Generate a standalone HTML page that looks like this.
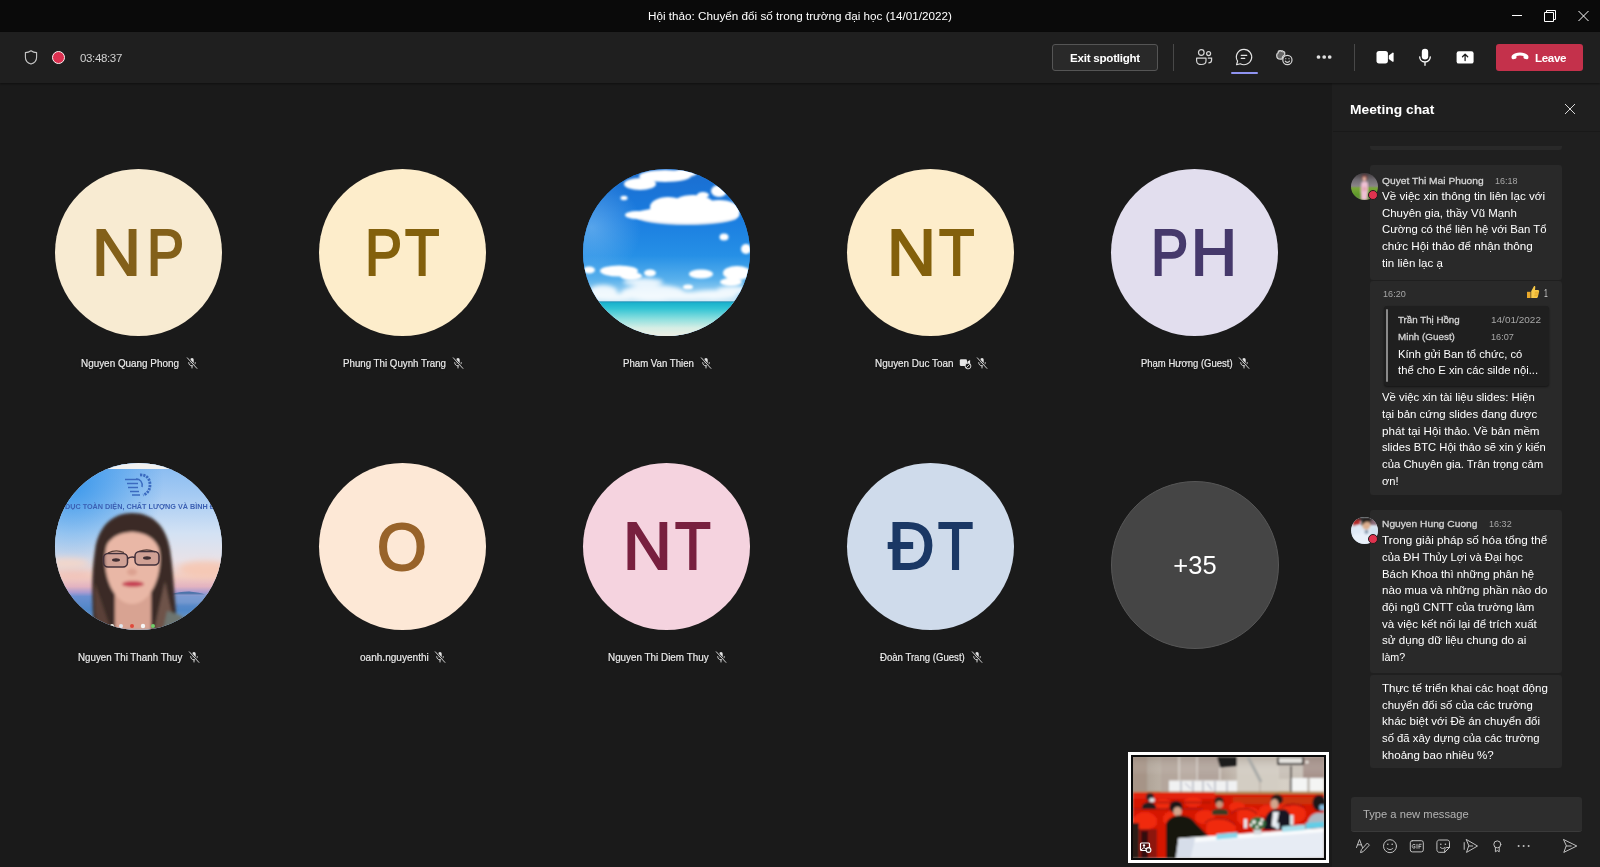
<!DOCTYPE html>
<html>
<head>
<meta charset="utf-8">
<title>Meeting</title>
<style>
*{box-sizing:border-box;margin:0;padding:0}
html,body{width:1600px;height:867px;overflow:hidden;background:#1f1f1f;font-family:"Liberation Sans",sans-serif;color:#fff}
.abs{position:absolute}
#titlebar{will-change:transform;position:absolute;left:0;top:0;width:1600px;height:32px;background:#0a0a0a}
#title{position:absolute;left:0;width:1600px;top:9px;text-align:center;font-size:11.7px;line-height:14px;color:#fff;letter-spacing:0}
#toolbar{will-change:transform;position:absolute;left:0;top:32px;width:1600px;height:51px;background:#1f1f1f;box-shadow:0 1px 2px rgba(0,0,0,.45);z-index:3}
#stage{will-change:transform;position:absolute;left:0;top:83px;width:1332px;height:784px;background:#1a1a1a}
#chat{will-change:transform;position:absolute;left:1333px;top:83px;width:267px;height:784px;background:#1f1f1f}
.av{position:absolute;width:167px;height:167px;border-radius:50%;overflow:hidden;text-align:center}
.av span{display:block}
.L{position:absolute;font-weight:normal;font-size:64px;line-height:64px;-webkit-text-stroke:2.0px currentColor;transform-origin:0 0}
.nm{position:absolute;transform-origin:0 0;-webkit-text-stroke:0.2px #ececec;font-size:11px;line-height:14px;color:#ececec;white-space:nowrap;text-shadow:0 0 2px rgba(0,0,0,.6)}
.mic{position:absolute;width:12px;height:12px}
.bubl{position:absolute;left:37px;width:192px;background:#292929;border-radius:3px}
.ln{position:absolute;white-space:nowrap;line-height:16px;transform-origin:0 0}
.ct{position:absolute;left:1383px;font-size:11.4px;line-height:16.7px;color:#fff;white-space:nowrap}
.cn{position:absolute;font-size:9.8px;line-height:12px;color:#d6d6d6;white-space:nowrap;font-weight:bold}
.tm{position:absolute;font-size:9.8px;line-height:12px;color:#adadad;white-space:nowrap}
</style>
</head>
<body>
<div id="titlebar">
  <div id="title">Hội thảo: Chuyển đổi số trong trường đại học (14/01/2022)</div>
  <svg class="abs" style="left:1506px;top:4px" width="90" height="24" viewBox="0 0 90 24" fill="none" stroke="#fff" stroke-width="1">
    <path d="M6 11.5h10"/>
    <path d="M38.5 8.5h9v9h-9z"/><path d="M40.5 8.5v-2h9v9h-2"/>
    <path d="M72.5 7l10 10M82.500 7l-10 10"/>
  </svg>
</div>

<div id="toolbar">
  <!-- shield -->
  <svg class="abs" style="left:23px;top:17px" width="16" height="17" viewBox="0 0 16 17" fill="none" stroke="#c8c8c8" stroke-width="1.1" stroke-linejoin="round">
    <path d="M8 1.7c1.7 1.2 3.6 1.8 5.6 1.9v4.6c0 3.300-2.100 5.700-5.600 6.900c-3.500-1.200-5.600-3.600-5.600-6.900v-4.600c2-0.100 3.900-0.700 5.600-1.900z"/>
  </svg>
  <!-- record -->
  <div class="abs" style="left:51.500px;top:19px;width:13px;height:13px;border-radius:50%;border:1.700px solid #fbf3f4;background:#dc3050"></div>
  <div class="abs" style="left:80px;top:19px;font-size:11.5px;line-height:14px;color:#d0d0d0;letter-spacing:-0.35px">03:48:37</div>

  <!-- exit spotlight -->
  <div class="abs" style="left:1052px;top:12px;width:106px;height:27px;border:1px solid #555;border-radius:3px;background:#292929;text-align:center;font-size:11.6px;line-height:25px;font-weight:bold;color:#fff;letter-spacing:-0.25px">Exit spotlight</div>
  <div class="abs" style="left:1173px;top:12px;width:1px;height:27px;background:#484848"></div>

  <!-- people -->
  <svg class="abs" style="left:1194px;top:15px" width="20" height="20" viewBox="0 0 20 20" fill="none" stroke="#d6d6d6" stroke-width="1.2">
    <circle cx="7.300" cy="5.500" r="2.800"/>
    <circle cx="14.600" cy="6.600" r="2"/>
    <path d="M2.600 11.200h9.400v2.500c0 2.200-1.900 3.800-4.700 3.800s-4.700-1.600-4.700-3.800z" stroke-linejoin="round"/>
    <path d="M13.800 11.200h3.800v1.800c0 1.700-1.300 2.900-3.200 2.900"/>
  </svg>
  <!-- chat -->
  <svg class="abs" style="left:1234px;top:15px" width="20" height="20" viewBox="0 0 20 20" fill="none" stroke="#e4e4e4" stroke-width="1.2" stroke-linecap="round" stroke-linejoin="round">
    <path d="M10 2.300a7.700 7.700 0 1 1-3.700 14.450l-3.700 1 1-3.600a7.700 7.700 0 0 1 6.400-11.850z"/>
    <path d="M7.200 8.300h5.600M7.200 11.300h3.600"/>
  </svg>
  <div class="abs" style="left:1231px;top:40px;width:27px;height:2px;border-radius:1px;background:#8f93f0"></div>
  <!-- reactions -->
  <svg class="abs" style="left:1274px;top:15px" width="20" height="20" viewBox="0 0 20 20" fill="none" stroke="#d6d6d6" stroke-width="1.200" stroke-linejoin="round">
    <path d="M3 7.200c0-1 .7-1.400 1.300-1.200v-1.500c0-1 1.300-1 1.500-.2c.2-1 1.600-1 1.700 0c.3-.8 1.600-.7 1.600.3v.4c.5-.6 1.600-.3 1.600.6v2.400c-1.500.6-2.500 2-2.400 3.700c-.5.300-1.100.5-1.900.5c-2.200 0-3.700-1.400-3.700-3.700z" fill="#7d7d7d" fill-opacity=".75"/>
    <circle cx="13.400" cy="13" r="4.600"/>
    <path d="M11.300 14.200c1 1.500 3.200 1.500 4.200 0" stroke-linecap="round"/>
    <circle cx="11.800" cy="11.700" r=".6" fill="#d6d6d6" stroke="none"/><circle cx="15" cy="11.700" r=".6" fill="#d6d6d6" stroke="none"/>
  </svg>
  <!-- more -->
  <svg class="abs" style="left:1316px;top:22px" width="17" height="6" viewBox="0 0 17 6" fill="#e0e0e0"><circle cx="2.500" cy="3" r="1.850"/><circle cx="8.200" cy="3" r="1.850"/><circle cx="13.700" cy="3" r="1.850"/></svg>

  <div class="abs" style="left:1354px;top:12px;width:1px;height:27px;background:#484848"></div>

  <!-- video -->
  <svg class="abs" style="left:1375px;top:15px" width="20" height="20" viewBox="0 0 20 20" fill="#fff">
    <rect x="1.500" y="4" width="11.400" height="12.400" rx="2.600"/>
    <path d="M13.800 8.400l3.700-2.700c.45-.3 1.100 0 1.100.55v7.900c0 .55-.65.850-1.100.55l-3.700-2.700z"/>
  </svg>
  <!-- mic -->
  <svg class="abs" style="left:1415px;top:15px" width="20" height="20" viewBox="0 0 20 20" fill="none">
    <rect x="6.800" y="1.800" width="6.400" height="10.600" rx="3.200" fill="#fff"/>
    <path d="M4.700 9.800c0 3 2.300 5.200 5.300 5.200s5.300-2.200 5.300-5.200M10 15v3.300" stroke="#fff" stroke-width="1.300" stroke-linecap="round"/>
  </svg>
  <!-- share -->
  <svg class="abs" style="left:1455px;top:15px" width="20" height="20" viewBox="0 0 20 20">
    <rect x="1.600" y="4.200" width="17" height="12.400" rx="2.200" fill="#fff"/>
    <path d="M10.100 13.600v-6.200M7.500 9.800l2.600-2.600l2.600 2.600" stroke="#1f1f1f" stroke-width="1.300" fill="none" stroke-linecap="round" stroke-linejoin="round"/>
  </svg>
  <!-- leave -->
  <div class="abs" style="left:1496px;top:12px;width:87px;height:27px;border-radius:3px;background:#c4314b"></div>
  <svg class="abs" style="left:1510px;top:18px" width="20" height="14" viewBox="0 0 20 14" fill="#fff">
    <path d="M10 2.600c3.300 0 6 .9 7.600 2.500c1 1 1.100 2.400.6 3.500c-.25.550-.8.800-1.400.65l-2.300-.6c-.6-.15-1-.65-1-1.250v-1.300c-1.100-.45-2.300-.6-3.500-.6s-2.400.15-3.500.6v1.300c0 .6-.4 1.100-1 1.250l-2.300.6c-.6.150-1.150-.1-1.400-.65c-.5-1.100-.4-2.500.6-3.500c1.600-1.600 4.300-2.500 7.600-2.500z"/>
  </svg>
  <div class="abs" style="left:1535px;top:18px;font-size:11.600px;line-height:15px;font-weight:bold;color:#fff;letter-spacing:-0.35px">Leave</div>
</div>
<div id="stage">
  <!-- row 1 (stage offset top = 83) -->
  <div class="av" style="left:55px;top:86px;background:#f8ebd2;color:#83601a"><b class="L" style="left:37.40px;top:52.10px;transform:scale(1.0584,1.0080)">N</b><b class="L" style="left:91.77px;top:52.10px;transform:scale(0.8681,1.0080)">P</b></div>
  <div class="av" style="left:319px;top:86px;background:#fdedcb;color:#83600c"><b class="L" style="left:46.37px;top:52.10px;transform:scale(0.8681,1.0080)">P</b><b class="L" style="left:86.20px;top:52.10px;transform:scale(0.8792,1.0080)">T</b></div>
  <div class="av" id="sky" style="left:583px;top:86px;background:#2f86dc"><svg width="167" height="167" viewBox="0 0 167 167" style="display:block">
  <defs>
    <linearGradient id="skg" x1="0" y1="0" x2="0" y2="1">
      <stop offset="0" stop-color="#1a6dd0"/><stop offset="0.3" stop-color="#1a7de0"/><stop offset="0.52" stop-color="#2690e6"/>
      <stop offset="0.66" stop-color="#58b0ec"/><stop offset="0.76" stop-color="#a9d8f3"/><stop offset="0.8" stop-color="#cfe9f6"/>
    </linearGradient>
    <linearGradient id="sea" x1="0" y1="0" x2="0" y2="1">
      <stop offset="0" stop-color="#14aecb"/><stop offset="0.2" stop-color="#33c4d4"/><stop offset="0.5" stop-color="#8fe0df"/>
      <stop offset="0.75" stop-color="#d6eee5"/><stop offset="1" stop-color="#efeee3"/>
    </linearGradient>
    <filter id="bl1" x="-20%" y="-20%" width="140%" height="140%"><feGaussianBlur stdDeviation="1.300"/></filter>
    <filter id="bl2" x="-20%" y="-20%" width="140%" height="140%"><feGaussianBlur stdDeviation="2.200"/></filter>
    <radialGradient id="sun" cx="0.05" cy="0.35" r="0.3"><stop offset="0" stop-color="#9fd0f7" stop-opacity=".45"/><stop offset="1" stop-color="#9fd0f7" stop-opacity="0"/></radialGradient>
  </defs>
  <rect width="167" height="167" fill="url(#skg)"/>
  <rect width="167" height="167" fill="url(#sun)"/>
  <!-- horizon haze clouds -->
  <g filter="url(#bl2)" fill="#fff" opacity=".85">
    <ellipse cx="20" cy="123" rx="14" ry="7"/><ellipse cx="70" cy="124" rx="32" ry="8"/><ellipse cx="130" cy="126" rx="24" ry="5"/>
    <ellipse cx="60" cy="113" rx="20" ry="4"/><ellipse cx="100" cy="127" rx="40" ry="4"/><ellipse cx="150" cy="121" rx="16" ry="4"/><ellipse cx="30" cy="128" rx="24" ry="3.500"/>
  </g>
  <!-- lower clouds -->
  <g filter="url(#bl1)" fill="#fff">
    <ellipse cx="6" cy="101" rx="6" ry="3.500"/>
    <ellipse cx="36" cy="102" rx="19" ry="5.500"/><ellipse cx="48" cy="107" rx="11" ry="4"/>
    <ellipse cx="67" cy="104" rx="6" ry="3.500"/>
    <ellipse cx="118" cy="105" rx="12" ry="4.600"/>
    <ellipse cx="154" cy="104" rx="14" ry="7"/><ellipse cx="148" cy="113" rx="11" ry="4"/>
    <ellipse cx="163" cy="80" rx="5" ry="5"/>
    <ellipse cx="141" cy="68" rx="4.500" ry="3.500"/>
    <ellipse cx="41" cy="29" rx="3.500" ry="2.200"/>
    <ellipse cx="105" cy="118" rx="5" ry="2.500"/>
  </g>
  <!-- big cloud -->
  <g filter="url(#bl1)" fill="#c3d6ec">
    <ellipse cx="104" cy="48.500" rx="50" ry="7.500"/><ellipse cx="136" cy="45" rx="20" ry="8"/><ellipse cx="90" cy="47" rx="20" ry="6"/>
  </g>
  <g filter="url(#bl1)" fill="#fff">
    <ellipse cx="104" cy="46" rx="52" ry="8.500"/>
    <ellipse cx="85" cy="38" rx="18" ry="10"/>
    <ellipse cx="110" cy="37" rx="22" ry="11"/>
    <ellipse cx="136" cy="41" rx="21" ry="10"/>
    <ellipse cx="136" cy="22" rx="8" ry="6"/>
    <ellipse cx="120" cy="26" rx="6" ry="3"/>
    <ellipse cx="54" cy="46" rx="12" ry="4"/>
  </g>
  <!-- top-left cloud -->
  <g filter="url(#bl1)" fill="#fff">
    <ellipse cx="57" cy="15" rx="16" ry="6"/><ellipse cx="82" cy="7" rx="26" ry="6"/><ellipse cx="102" cy="4" rx="12" ry="4"/>
  </g>
  <rect x="0" y="132.700" width="167" height="35" fill="url(#sea)"/>
  <rect x="0" y="132.200" width="167" height="1.200" fill="#2b8fb4" opacity=".7"/>
</svg></div>
  <div class="av" style="left:847px;top:86px;background:#fdedcb;color:#83600c"><b class="L" style="left:39.81px;top:52.10px;transform:scale(1.0582,1.0080)">N</b><b class="L" style="left:91.75px;top:52.10px;transform:scale(0.9054,1.0080)">T</b></div>
  <div class="av" style="left:1111px;top:86px;background:#e2deee;color:#46396b"><b class="L" style="left:40.19px;top:52.10px;transform:scale(0.8734,1.0080)">P</b><b class="L" style="left:80.34px;top:52.10px;transform:scale(0.9932,1.0080)">H</b></div>
  <!-- row 2 -->
  <div class="av" id="woman" style="left:55px;top:379.500px;background:#a9c8ee"><svg width="167" height="167" viewBox="0 0 167 167" style="display:block">
  <defs>
    <linearGradient id="wbg" x1="0" y1="0" x2="0" y2="1">
      <stop offset="0" stop-color="#86baf1"/><stop offset="0.2" stop-color="#a6cbf3"/><stop offset="0.42" stop-color="#d3e2f4"/>
      <stop offset="0.58" stop-color="#e8e2e8"/><stop offset="0.68" stop-color="#f2cdc2"/><stop offset="0.74" stop-color="#e3b3c0"/>
      <stop offset="0.775" stop-color="#a99bd0"/><stop offset="0.8" stop-color="#6a8fd0"/><stop offset="0.88" stop-color="#4f86c6"/><stop offset="1" stop-color="#86a8c6"/>
    </linearGradient>
    <radialGradient id="wbl" cx="0.1" cy="0.12" r="0.55"><stop offset="0" stop-color="#2a90ea" stop-opacity=".85"/><stop offset="1" stop-color="#2a90ea" stop-opacity="0"/></radialGradient>
    <filter id="wb1" x="-20%" y="-20%" width="140%" height="140%"><feGaussianBlur stdDeviation="1.500"/></filter>
    <filter id="wb2" x="-20%" y="-20%" width="140%" height="140%"><feGaussianBlur stdDeviation="0.600"/></filter>
    <filter id="wb3" x="-30%" y="-30%" width="160%" height="160%"><feGaussianBlur stdDeviation="3"/></filter>
  </defs>
  <rect width="167" height="167" fill="url(#wbg)"/>
  <rect width="167" height="167" fill="url(#wbl)"/>
  <rect x="40" y="0" width="90" height="6" fill="#f1f1f1"/>
  <g filter="url(#wb3)"><ellipse cx="12" cy="100" rx="22" ry="5" fill="#f6d6c8" opacity=".9"/><ellipse cx="18" cy="112" rx="20" ry="4" fill="#f0c0b8" opacity=".8"/><ellipse cx="150" cy="106" rx="26" ry="8" fill="#f7c7b0" opacity=".85"/></g>
  <path d="M114 131.500c8-2 16-3.200 22-2.800c6 .4 10 1.300 14 2.800z" fill="#4a6fa8" filter="url(#wb2)"/>
  <rect x="100" y="131" width="60" height="10" fill="#9fb3d6" opacity=".35" filter="url(#wb1)"/>
  <g fill="none" stroke="#3a6bc0" stroke-width="1.500" filter="url(#wb2)">
    <path d="M85 12c6-.5 10 3.500 10 9.500s-3 9.500-7 10.500" stroke-width="2.800" stroke-dasharray="2.200 1"/>
    <path d="M70 16.500h13M72 20.500h11M73 24.500h10M75 28.500h9M77 32h8"/>
    <path d="M81 16c4 0 7 3 6 8"/>
  </g>
  <text x="10" y="45.600" font-family="Liberation Sans, sans-serif" font-weight="bold" font-size="7.300" fill="#3b60b4" textLength="150" lengthAdjust="spacingAndGlyphs" filter="url(#wb2)">DỤC TOÀN DIỆN, CHẤT LƯỢNG VÀ BÌNH Đ</text>
  <g filter="url(#wb1)">
    <path d="M39 167c-2-30-3-55 1-80c3-22 16-37 37-37s34 13 38 36c4 25 4 52 8 81z" fill="#3a2a25"/>
    <path d="M110 118c3 15 6 32 13 49h-24z" fill="#6e5349"/>
    <path d="M40 120c-1 16 0 32 2 47h14z" fill="#5a4038"/>
    <path d="M112 148c9 2 18 6 24 12v7h-28z" fill="#6d756f"/>
    <path d="M60 128h36v39h-36z" fill="#d8a392"/>
    <path d="M50 96c0-20 9-32 27-32s28 12 28 32c0 24-12 45-28 45s-27-21-27-45z" fill="#e9b7a6"/>
    <path d="M47 92c1-20 10-36 30-36s30 16 30 38c-4-15-11-24-30-25c-18 1-25 9-30 23z" fill="#3a2a25"/>
    <ellipse cx="78" cy="121" rx="11" ry="3" fill="#c63f52"/>
    <ellipse cx="77" cy="109" rx="5" ry="3.500" fill="#dca190"/>
    <ellipse cx="110" cy="62" rx="20" ry="10" fill="#3a2a25" opacity="0"/>
  </g>
  <g filter="url(#wb2)">
    <ellipse cx="61" cy="97" rx="4" ry="1.700" fill="#3a2a2a"/><ellipse cx="92" cy="95" rx="4" ry="1.700" fill="#3a2a2a"/>
    <path d="M53 90c5-2.500 11-2.500 16-.5M84 88.500c5-2 11-2 16 .5" stroke="#5a4038" stroke-width="1.300" fill="none"/>
    <g fill="rgba(90,60,75,.18)" stroke="#43303a" stroke-width="1.500">
      <rect x="48.500" y="90.500" width="24" height="13.500" rx="4.500"/><rect x="80" y="88.500" width="24" height="13.500" rx="4.500"/>
      <path d="M72.500 95.500c3-1.800 5-1.800 7.500-1" fill="none"/>
    </g>
  </g>
  <g filter="url(#wb2)"><circle cx="57" cy="163" r="2" fill="#f1f1e8"/><circle cx="66" cy="163" r="2" fill="#dfe6ee"/><circle cx="77" cy="163" r="2" fill="#e04a3a"/><circle cx="88" cy="163" r="2.200" fill="#f5f5f5"/><circle cx="98" cy="163" r="2" fill="#6fcf6a"/></g>
</svg></div>
  <div class="av" style="left:319px;top:379.500px;background:#fde8d6;color:#98632a"><b class="L" style="left:57.76px;top:51.09px;transform:scale(0.9991,1.0317)">O</b></div>
  <div class="av" style="left:583px;top:379.500px;background:#f5d3df;color:#78203f"><b class="L" style="left:39.84px;top:50.31px;transform:scale(1.0541,1.0293)">N</b><b class="L" style="left:91.85px;top:50.31px;transform:scale(0.9137,1.0292)">T</b></div>
  <div class="av" style="left:847px;top:379.500px;background:#cfdbeb;color:#1b3865"><b class="L" style="left:41.25px;top:50.31px;transform:scale(1.0000,1.0293)">Đ</b><b class="L" style="left:90.88px;top:50.31px;transform:scale(0.8976,1.0293)">T</b></div>
  <div class="av" style="left:1111px;top:397.500px;width:168px;height:168px;background:#454545;border:1px solid #575757"><span style="font-size:25.500px;line-height:167px;color:#fff;-webkit-text-stroke:0">+35</span></div>

  <div class="nm" style="left:81px;top:273.2px;transform:scaleX(0.9003)">Nguyen Quang Phong</div><svg class="mic" style="left:186px;top:274px" viewBox="0 0 12 12" fill="none"><rect x="4.300" y="1" width="3.400" height="6" rx="1.700" fill="#e6e6e6"/><path d="M2.700 5.600c0 1.900 1.400 3.200 3.300 3.200s3.300-1.300 3.300-3.200M6 8.800v2.200" stroke="#e6e6e6" stroke-width="0.9" stroke-linecap="round"/><path d="M1.300 0.800l9.600 10.600" stroke="#1b1b1b" stroke-width="2.200"/><path d="M1.300 0.800l9.600 10.600" stroke="#e6e6e6" stroke-width="0.9" stroke-linecap="round"/></svg>
  <div class="nm" style="left:342.5px;top:273.2px;transform:scaleX(0.8834)">Phung Thi Quynh Trang</div><svg class="mic" style="left:452px;top:274px" viewBox="0 0 12 12" fill="none"><rect x="4.300" y="1" width="3.400" height="6" rx="1.700" fill="#e6e6e6"/><path d="M2.700 5.600c0 1.900 1.400 3.200 3.300 3.200s3.300-1.300 3.300-3.200M6 8.800v2.200" stroke="#e6e6e6" stroke-width="0.9" stroke-linecap="round"/><path d="M1.300 0.800l9.600 10.600" stroke="#1b1b1b" stroke-width="2.200"/><path d="M1.300 0.800l9.600 10.600" stroke="#e6e6e6" stroke-width="0.9" stroke-linecap="round"/></svg>
  <div class="nm" style="left:623px;top:273.2px;transform:scaleX(0.8755)">Pham Van Thien</div><svg class="mic" style="left:700px;top:274px" viewBox="0 0 12 12" fill="none"><rect x="4.300" y="1" width="3.400" height="6" rx="1.700" fill="#e6e6e6"/><path d="M2.700 5.600c0 1.900 1.400 3.200 3.300 3.200s3.300-1.300 3.300-3.200M6 8.800v2.200" stroke="#e6e6e6" stroke-width="0.9" stroke-linecap="round"/><path d="M1.300 0.800l9.600 10.600" stroke="#1b1b1b" stroke-width="2.200"/><path d="M1.300 0.800l9.600 10.600" stroke="#e6e6e6" stroke-width="0.9" stroke-linecap="round"/></svg>
  <div class="nm" style="left:874.8px;top:273.2px;transform:scaleX(0.8984)">Nguyen Duc Toan</div><svg class="abs" style="left:959px;top:275px" width="13" height="12" viewBox="0 0 13 12"><rect x=".8" y="1.300" width="7.200" height="6.800" rx="1.300" fill="#e6e6e6"/><path d="M8.500 3.600l2.600-1.700v5.600l-2.600-1.700z" fill="#e6e6e6"/><circle cx="9" cy="8" r="2.900" fill="#1a1a1a" stroke="#e6e6e6" stroke-width=".9"/><path d="M7.200 9.800l3.600-3.600" stroke="#e6e6e6" stroke-width=".9"/></svg><svg class="mic" style="left:976px;top:274px" viewBox="0 0 12 12" fill="none"><rect x="4.300" y="1" width="3.400" height="6" rx="1.700" fill="#e6e6e6"/><path d="M2.700 5.600c0 1.900 1.400 3.200 3.300 3.200s3.300-1.300 3.300-3.200M6 8.800v2.200" stroke="#e6e6e6" stroke-width="0.9" stroke-linecap="round"/><path d="M1.300 0.800l9.600 10.600" stroke="#1b1b1b" stroke-width="2.200"/><path d="M1.300 0.800l9.600 10.600" stroke="#e6e6e6" stroke-width="0.9" stroke-linecap="round"/></svg>
  <div class="nm" style="left:1140.6px;top:273.2px;transform:scaleX(0.8614)">Phạm Hương (Guest)</div><svg class="mic" style="left:1238px;top:274px" viewBox="0 0 12 12" fill="none"><rect x="4.300" y="1" width="3.400" height="6" rx="1.700" fill="#e6e6e6"/><path d="M2.700 5.600c0 1.900 1.400 3.200 3.300 3.200s3.300-1.300 3.300-3.200M6 8.800v2.200" stroke="#e6e6e6" stroke-width="0.9" stroke-linecap="round"/><path d="M1.300 0.800l9.600 10.600" stroke="#1b1b1b" stroke-width="2.200"/><path d="M1.300 0.800l9.600 10.600" stroke="#e6e6e6" stroke-width="0.9" stroke-linecap="round"/></svg>
  <div class="nm" style="left:78.1px;top:566.7px;transform:scaleX(0.8890)">Nguyen Thi Thanh Thuy</div><svg class="mic" style="left:188px;top:567.5px" viewBox="0 0 12 12" fill="none"><rect x="4.300" y="1" width="3.400" height="6" rx="1.700" fill="#e6e6e6"/><path d="M2.700 5.600c0 1.900 1.400 3.200 3.300 3.200s3.300-1.300 3.300-3.200M6 8.800v2.200" stroke="#e6e6e6" stroke-width="0.9" stroke-linecap="round"/><path d="M1.300 0.800l9.600 10.600" stroke="#1b1b1b" stroke-width="2.200"/><path d="M1.300 0.800l9.600 10.600" stroke="#e6e6e6" stroke-width="0.9" stroke-linecap="round"/></svg>
  <div class="nm" style="left:360px;top:566.7px;transform:scaleX(0.9140)">oanh.nguyenthi</div><svg class="mic" style="left:434px;top:567.5px" viewBox="0 0 12 12" fill="none"><rect x="4.300" y="1" width="3.400" height="6" rx="1.700" fill="#e6e6e6"/><path d="M2.700 5.600c0 1.900 1.400 3.200 3.300 3.200s3.300-1.300 3.300-3.200M6 8.800v2.200" stroke="#e6e6e6" stroke-width="0.9" stroke-linecap="round"/><path d="M1.300 0.800l9.600 10.600" stroke="#1b1b1b" stroke-width="2.200"/><path d="M1.300 0.800l9.600 10.600" stroke="#e6e6e6" stroke-width="0.9" stroke-linecap="round"/></svg>
  <div class="nm" style="left:608.1px;top:566.7px;transform:scaleX(0.8975)">Nguyen Thi Diem Thuy</div><svg class="mic" style="left:715px;top:567.5px" viewBox="0 0 12 12" fill="none"><rect x="4.300" y="1" width="3.400" height="6" rx="1.700" fill="#e6e6e6"/><path d="M2.700 5.600c0 1.900 1.400 3.200 3.300 3.200s3.300-1.300 3.300-3.200M6 8.800v2.200" stroke="#e6e6e6" stroke-width="0.9" stroke-linecap="round"/><path d="M1.300 0.800l9.600 10.600" stroke="#1b1b1b" stroke-width="2.200"/><path d="M1.300 0.800l9.600 10.600" stroke="#e6e6e6" stroke-width="0.9" stroke-linecap="round"/></svg>
  <div class="nm" style="left:880px;top:566.7px;transform:scaleX(0.8717)">Đoàn Trang (Guest)</div><svg class="mic" style="left:971px;top:567.5px" viewBox="0 0 12 12" fill="none"><rect x="4.300" y="1" width="3.400" height="6" rx="1.700" fill="#e6e6e6"/><path d="M2.700 5.600c0 1.900 1.400 3.200 3.300 3.200s3.300-1.300 3.300-3.200M6 8.800v2.200" stroke="#e6e6e6" stroke-width="0.9" stroke-linecap="round"/><path d="M1.300 0.800l9.600 10.600" stroke="#1b1b1b" stroke-width="2.200"/><path d="M1.300 0.800l9.600 10.600" stroke="#e6e6e6" stroke-width="0.9" stroke-linecap="round"/></svg>

  <!-- thumbnail -->
  <div class="abs" id="thumb" style="left:1128px;top:669px;width:201px;height:111px;border:3px solid #fff;background:#0a0a0a;padding:2px"><svg width="191" height="101" viewBox="0 0 191 101" style="display:block"><defs>
    <filter id="tb1" x="-10%" y="-10%" width="120%" height="120%"><feGaussianBlur stdDeviation=".8"/></filter>
    <filter id="tb2" x="-10%" y="-10%" width="120%" height="120%"><feGaussianBlur stdDeviation=".4"/></filter>
    <filter id="tb3" x="-10%" y="-10%" width="120%" height="120%"><feGaussianBlur stdDeviation="2"/></filter>
    <linearGradient id="wall" x1="0" y1="0" x2="1" y2="0"><stop offset="0" stop-color="#a3968a"/><stop offset="0.12" stop-color="#b7aca0"/><stop offset="0.25" stop-color="#c4bbb0"/><stop offset="0.45" stop-color="#b3a69c"/><stop offset="0.6" stop-color="#cdc6bb"/><stop offset="0.8" stop-color="#d6d0c6"/><stop offset="1" stop-color="#b7a79f"/></linearGradient>
    <linearGradient id="wallv" x1="0" y1="0" x2="0" y2="1"><stop offset="0" stop-color="#8a7a70" stop-opacity=".35"/><stop offset="0.5" stop-color="#fff" stop-opacity="0"/></linearGradient>
  </defs>
  <rect width="191" height="101" fill="url(#wall)"/>
  <g filter="url(#tb1)">
    <rect x="0" y="0" width="14" height="36" fill="#a69487"/><rect x="28" y="0" width="18" height="36" fill="#b4a69c"/><rect x="62" y="0" width="24" height="30" fill="#b2a49c"/><rect x="46" y="0" width="16" height="30" fill="#b9aca3"/>
    <rect x="104" y="0" width="40" height="36" fill="#d3cdc3"/><rect x="170" y="0" width="21" height="22" fill="#a7938c"/><rect x="146" y="8" width="24" height="14" fill="#c9c1b8"/>
    <rect width="191" height="36" fill="url(#wallv)"/>
    <rect x="36" y="23.500" width="68" height="11.500" fill="#f0f1f2"/><rect x="157" y="21" width="34" height="17" fill="#f4f5f4"/>
    <path d="M46 0v23M64 0v23M87 0v23" stroke="#ece8e2" stroke-width="1"/>
    <path d="M48 24v11M60 24v11M70 24v11M82 24v11M94 24v11" stroke="#b3b5c0" stroke-width="1.400"/><path d="M52 26l6 6M74 26l5 7" stroke="#9aa0b8" stroke-width="1"/><path d="M175.500 21v17" stroke="#b0a8a0" stroke-width="2"/>
    <path d="M84 0h20v9l-17 1.500z" fill="#1c1a1a"/><rect x="144" y="0" width="27" height="8" fill="#25221f"/><rect x="146" y="1" width="23" height="5" fill="#e4e2de"/><circle cx="174" cy="5" r="1.500" fill="#f3f0ea"/>
    <path d="M115 0l13 25" stroke="#a9aaa8" stroke-width="3"/><path d="M127 25v12" stroke="#b5a9a0" stroke-width="1"/><path d="M158 9v32" stroke="#2a2624" stroke-width="1.300"/>
    <rect x="0" y="34.500" width="191" height="6" fill="#b08650"/>
    <rect x="0" y="37" width="191" height="64" fill="#d51806"/>
    <rect x="0" y="35.500" width="82" height="6" fill="#e3200c"/>
    <rect x="100" y="40" width="91" height="7" fill="#b8601f" opacity=".4"/>
    <g fill="#f02a10"><ellipse cx="12" cy="64" rx="12" ry="9"/><ellipse cx="40" cy="62" rx="10" ry="8"/><ellipse cx="72" cy="60" rx="10" ry="7"/><ellipse cx="88" cy="72" rx="15" ry="11"/><ellipse cx="116" cy="60" rx="12" ry="10"/><ellipse cx="162" cy="57" rx="11" ry="9"/><ellipse cx="134" cy="54" rx="8" ry="6"/><ellipse cx="30" cy="47" rx="9" ry="5"/><ellipse cx="60" cy="45" rx="9" ry="5"/><ellipse cx="150" cy="52" rx="6" ry="5"/><ellipse cx="104" cy="50" rx="8" ry="5"/></g>
    <g stroke="#a8180a" stroke-width="1.300" fill="none"><path d="M0 52h70M14 45.500h64M98 57c6-7 20-7 26 0M148 51c6-5 18-5 24 0M72 66c6-6 24-6 30 2"/></g>
    <path d="M-2 66h8v35h-8z" fill="#2a1a18"/><path d="M6 72h18v29h-18z" fill="#7a1208" opacity=".8"/><path d="M8 74h7v27h-7z" fill="#33100a"/>
    <ellipse cx="17" cy="40" rx="4" ry="4" fill="#2a2220"/><ellipse cx="19" cy="43" rx="2.800" ry="2" fill="#dfe3e6"/><path d="M9 49c2-5 10-5 14 0v3h-14z" fill="#241c1a"/>
    <ellipse cx="43" cy="50" rx="6.500" ry="6.300" fill="#1d1715"/><ellipse cx="44.500" cy="54.500" rx="4.200" ry="4.500" fill="#d3a48c"/>
    <path d="M33 101v-34c2-6 8-8.500 14-8.500s12 2 16 8l12 12l-16 5l-13 2v15.500z" fill="#17120f"/>
    <ellipse cx="86" cy="44" rx="4.600" ry="4.200" fill="#2a201c"/><ellipse cx="86.500" cy="47.500" rx="3.400" ry="3.400" fill="#c9957c"/><path d="M79 54c3-3 13-3 16 0v4h-16z" fill="#3a3a24"/>
    <ellipse cx="144" cy="42.500" rx="6" ry="5" fill="#231c19"/><ellipse cx="141.500" cy="47" rx="4" ry="5" fill="#d2a58d"/>
    <path d="M131 70c0-10 4-16 10-17.500l11 0c5 2 7 8 7 17.500l-2 3h-26z" fill="#181820"/><path d="M140 55l6 0l-3 16l-4.500-2z" fill="#e9edf2"/>
    <ellipse cx="186" cy="46" rx="6.500" ry="8" fill="#1f1917"/><ellipse cx="189" cy="50.500" rx="2.800" ry="3" fill="#7fb8dc"/><path d="M174 70c0-8 4-13 10-14h7v14z" fill="#aeb8c2"/>
    <path d="M43 101l2.500-19.500l145.500-10.500v30z" fill="#e7ecf4"/><path d="M45.500 81.500l145.500-10.500v4l-146 11.500z" fill="#f9fbfd"/>
    <path d="M43 101l2.500-19l17-1.500l-5 20.500z" fill="#d6dde9"/>
    <path d="M83.500 77l21-1.800v5.600l-21 1.800z" fill="#86d6ea"/><path d="M149 69.500l23-2v5.500l-23 2z" fill="#a6dfec"/><path d="M172.500 66l18.500-1.600v6.200l-18.500 1.600z" fill="#62cde6"/>
    <ellipse cx="124.500" cy="66.500" rx="8.500" ry="6.500" fill="#2f6a3a"/><circle cx="121" cy="65" r="2" fill="#f2f2ec"/><circle cx="127.500" cy="66.500" r="2" fill="#f6f6f0"/><circle cx="124" cy="70" r="1.600" fill="#ecece4"/><circle cx="129" cy="63" r="1.400" fill="#fff"/><circle cx="118" cy="68" r="1.300" fill="#fff"/>
    <rect x="120.500" y="72.500" width="8" height="5" fill="#d5d9de"/>
    <rect x="111" y="62" width="3" height="9" fill="#e6ecf0"/><rect x="157" y="58" width="3.500" height="10" fill="#dfe6ea"/><rect x="143" y="66" width="3" height="6" fill="#d8e4ec"/>
  </g>
  <g filter="url(#tb2)"><rect x="7.500" y="86" width="9" height="7.500" rx="1" fill="none" stroke="#fff" stroke-width="1.200"/><circle cx="11" cy="88.500" r="1.200" fill="#fff"/><path d="M8 93l3-2.500l2 1.500" stroke="#fff" stroke-width="1" fill="none"/><circle cx="15.500" cy="93" r="2.400" fill="#3a2a26" stroke="#fff" stroke-width="1.100"/></g>
</svg></div>
</div>
<div id="chat">
  <div class="abs" style="left:0;top:0;width:267px;height:49px;background:#1f1f1f;border-bottom:1px solid #191919"></div>
  <svg class="abs" style="left:231px;top:20px" width="12" height="12" viewBox="0 0 12 12" stroke="#d8d8d8" stroke-width="1" fill="none"><path d="M1 1l10 10M11 1L1 11"/></svg>

  <!-- previous bubble sliver -->
  <div class="abs" style="left:37px;top:63px;width:192px;height:4px;background:#292929;border-radius:0 0 3px 3px"></div>
  <!-- bubbles -->
  <div class="bubl" style="top:81.500px;height:115.500px"></div>
  <div class="bubl" style="top:198px;height:213.500px"></div>
  <div class="bubl" style="top:426.500px;height:163px"></div>
  <div class="bubl" style="top:592px;height:93px"></div>
  <!-- quote -->
  <div class="abs" style="left:50.500px;top:222.500px;width:165px;height:80px;background:#1f1f1f;border-radius:3px;box-shadow:0 1px 2px rgba(0,0,0,.5)"></div>
  <div class="abs" style="left:53px;top:226px;width:2.400px;height:73px;background:#8a8a8a;border-radius:1px"></div>
  <!-- thumbs up -->
  <svg class="abs" style="left:193px;top:202px" width="14" height="15" viewBox="0 0 14 15">
    <path d="M5.200 6.200l2.600-4.800c.3-.6 1.500-.3 1.500.6l-.3 3h3c.9 0 1.300.8 1.100 1.500l-1.200 5.300c-.2.800-.8 1.200-1.600 1.200h-5.100z" fill="#f7c948"/>
    <path d="M1 6.800h3.600v6.200h-3.600z" fill="#e9a82a"/>
    <path d="M8.800 7.200h3.800M8.600 9h3.600M8.300 10.800h3.400" stroke="#d99a1c" stroke-width=".7" fill="none"/>
  </svg>
  <!-- avatars -->
  <div class="abs" id="cav1" style="left:17.500px;top:89.500px;width:27px;height:27px;border-radius:50%;overflow:hidden;background:#2a2a2a"><svg width="27" height="27" viewBox="0 0 27 27" style="display:block"><defs><filter id="c1b"><feGaussianBlur stdDeviation=".8"/></filter><linearGradient id="c1g" x1="0" y1="0" x2="0" y2="1"><stop offset="0" stop-color="#3e393c"/><stop offset="0.25" stop-color="#6f6a70"/><stop offset="0.48" stop-color="#8a8488"/><stop offset="0.56" stop-color="#7aa63a"/><stop offset="0.8" stop-color="#5f9a2a"/><stop offset="1" stop-color="#6b8a4a"/></linearGradient></defs>
  <rect width="27" height="27" fill="url(#c1g)"/>
  <g filter="url(#c1b)"><ellipse cx="13.500" cy="5" rx="2.800" ry="3" fill="#7a3030"/><ellipse cx="13.300" cy="6" rx="1.800" ry="2.200" fill="#e6b3a3"/>
  <path d="M10.300 9.500c1.500-1.200 5-1.200 6.500 0l.4 7l-1 10.500h-6l-.6-10z" fill="#eec0d3"/><path d="M11 14h5v4h-5z" fill="#e4a8b8"/></g></svg></div>
  <div class="abs" style="left:35px;top:106.700px;width:10.400px;height:10.400px;border-radius:50%;background:#e0334f;border:1.500px solid #241a1c"></div>
  <div class="abs" id="cav2" style="left:17.500px;top:433.500px;width:27px;height:27px;border-radius:50%;overflow:hidden;background:#2a2a2a"><svg width="27" height="27" viewBox="0 0 27 27" style="display:block"><defs><filter id="c2b"><feGaussianBlur stdDeviation=".8"/></filter></defs>
  <rect width="27" height="27" fill="#dde7f3"/>
  <g filter="url(#c2b)"><rect width="27" height="4" fill="#2a2a2c"/><path d="M2 3.500l7-1v4.500l-7 2.500z" fill="#b62a2a"/><rect x="17" y="3" width="10" height="5" fill="#8a6a78"/>
  <path d="M0 27c0-10 5-14 14-14s13 4 13 14z" fill="#e9f1fa"/><path d="M2 10c2-2 6-2 8 1v6h-8z" fill="#dfe9f6"/><path d="M19 11c3-2 6-1 8 1v8h-8z" fill="#d3e4f2"/>
  <ellipse cx="15.300" cy="7.800" rx="4" ry="5" fill="#dcae8e"/><path d="M10.300 9c-.6-5 2-7.500 5.200-7.500s5.300 2 4.700 5c-2-2-6-2.500-8 .5z" fill="#25201e"/>
  <path d="M13.500 13.500l2 4l2-4z" fill="#5e7690"/><path d="M12.500 15l3 2l2.500-2" stroke="#9fb3c8" stroke-width=".8" fill="none"/></g></svg></div>
  <div class="abs" style="left:35px;top:451px;width:10.400px;height:10.400px;border-radius:50%;background:#e0334f;border:1.500px solid #241a1c"></div>

  <!-- compose -->
  <div class="abs" style="left:18px;top:714px;width:231px;height:34.500px;background:#2d2d2d;border-radius:3px;border-bottom:1px solid #3a3a3a"></div>
  <svg class="abs" style="left:12px;top:749px" width="250" height="30" viewBox="1345 832 250 30" fill="none" stroke="#c2c2c2" stroke-width="1" stroke-linecap="round" stroke-linejoin="round">
    <!-- format -->
    <path d="M1356.500 847.500l3-8l3 8M1357.600 844.800h3.800"/>
    <path d="M1367.600 843.300l1.800 1.800l-6.300 6.600l-2.600 0.900l0.800-2.700z"/>
    <!-- emoji -->
    <circle cx="1390" cy="846.200" r="6.500"/>
    <path d="M1387 848.200c1.500 1.900 4.500 1.900 6 0"/>
    <circle cx="1387.800" cy="844.300" r=".8" fill="#c2c2c2" stroke="none"/><circle cx="1392.200" cy="844.300" r=".8" fill="#c2c2c2" stroke="none"/>
    <!-- gif -->
    <rect x="1410.300" y="840.700" width="13" height="11.200" rx="2"/>
    <path d="M1415 844.600c-1.800-.9-2.800.3-2.800 1.700s1.200 2.400 2.800 1.600v-1.500h-1M1417 844.300v4M1419 848.300v-4h2.200M1419 846.400h1.800" stroke-width=".9"/>
    <!-- sticker -->
    <path d="M1436.900 842.300c0-1.300 1-2.300 2.300-2.300h8c1.300 0 2.300 1 2.300 2.300v5.200l-4.800 4.800h-5.500c-1.300 0-2.300-1-2.300-2.300z"/>
    <path d="M1449.500 847.500h-2.500c-1.300 0-2.300 1-2.300 2.300v2.500"/>
    <path d="M1440.300 847.300c1 1.500 3.300 1.700 4.600.3"/>
    <circle cx="1440.800" cy="844.200" r=".8" fill="#c2c2c2" stroke="none"/><circle cx="1445.400" cy="844.200" r=".8" fill="#c2c2c2" stroke="none"/>
    <!-- stream/send later -->
    <path d="M1466.500 839.600l11 6.400l-11 6.400l2.200-6.400z"/><path d="M1468.700 846h4"/>
    <path d="M1464.200 842.600v6.800"/>
    <!-- praise -->
    <circle cx="1497.300" cy="844.400" r="3.500"/>
    <path d="M1495.400 847.500v4.300l1.900-1.300l1.900 1.300v-4.300"/>
    <!-- more -->
    <circle cx="1518.600" cy="846" r="1" fill="#c2c2c2" stroke="none"/><circle cx="1523.600" cy="846" r="1" fill="#c2c2c2" stroke="none"/><circle cx="1528.600" cy="846" r="1" fill="#c2c2c2" stroke="none"/>
    <!-- send -->
    <path d="M1563.800 839.600l13 6.400l-13 6.400l2.400-6.400z"/><path d="M1566.200 846h5"/>
  </svg>
<div class="ln" style="left:48.9px;top:89.6px;font-size:9.8px;font-weight:normal;color:#d4d4d4;-webkit-text-stroke:0.3px #d4d4d4;transform:scaleX(1.0451)">Quyet Thi Mai Phuong</div>
<div class="ln" style="left:162.0px;top:89.6px;font-size:9.8px;font-weight:normal;color:#a6a6a6;transform:scaleX(0.9213)">16:18</div>
<div class="ln" style="left:48.9px;top:104.9px;font-size:11.3px;font-weight:normal;color:#ffffff;transform:scaleX(1.0308)">Về việc xin thông tin liên lạc với</div>
<div class="ln" style="left:48.9px;top:121.6px;font-size:11.3px;font-weight:normal;color:#ffffff;transform:scaleX(1.0125)">Chuyên gia, thầy Vũ Mạnh</div>
<div class="ln" style="left:48.9px;top:138.3px;font-size:11.3px;font-weight:normal;color:#ffffff;transform:scaleX(1.0030)">Cường có thể liên hệ với Ban Tổ</div>
<div class="ln" style="left:48.9px;top:154.9px;font-size:11.3px;font-weight:normal;color:#ffffff;transform:scaleX(1.0346)">chức Hội thảo để nhận thông</div>
<div class="ln" style="left:48.9px;top:171.6px;font-size:11.3px;font-weight:normal;color:#ffffff;transform:scaleX(1.0208)">tin liên lạc ạ</div>
<div class="ln" style="left:49.8px;top:203.1px;font-size:9.8px;font-weight:normal;color:#a6a6a6;transform:scaleX(0.9294)">16:20</div>
<div class="ln" style="left:210.7px;top:202.9px;font-size:10.4px;font-weight:normal;color:#d0d0d0;transform:scaleX(0.6573)">1</div>
<div class="ln" style="left:64.8px;top:229.4px;font-size:9.8px;font-weight:normal;color:#d4d4d4;-webkit-text-stroke:0.3px #d4d4d4;transform:scaleX(0.9939)">Trần Thị Hồng</div>
<div class="ln" style="left:158.2px;top:229.4px;font-size:9.8px;font-weight:normal;color:#a6a6a6;transform:scaleX(1.0194)">14/01/2022</div>
<div class="ln" style="left:64.8px;top:245.9px;font-size:9.8px;font-weight:normal;color:#d4d4d4;-webkit-text-stroke:0.3px #d4d4d4;transform:scaleX(1.0049)">Minh (Guest)</div>
<div class="ln" style="left:158.2px;top:245.9px;font-size:9.8px;font-weight:normal;color:#a6a6a6;transform:scaleX(0.9294)">16:07</div>
<div class="ln" style="left:64.8px;top:262.7px;font-size:11.3px;font-weight:normal;color:#ffffff;transform:scaleX(0.9942)">Kính gửi Ban tổ chức, có</div>
<div class="ln" style="left:64.8px;top:279.3px;font-size:11.3px;font-weight:normal;color:#ffffff;transform:scaleX(1.0005)">thể cho E xin các silde nội...</div>
<div class="ln" style="left:48.9px;top:306.4px;font-size:11.3px;font-weight:normal;color:#ffffff;transform:scaleX(1.0062)">Về việc xin tài liệu slides: Hiện</div>
<div class="ln" style="left:48.9px;top:323.1px;font-size:11.3px;font-weight:normal;color:#ffffff;transform:scaleX(1.0139)">tại bản cứng slides đang được</div>
<div class="ln" style="left:48.9px;top:339.7px;font-size:11.3px;font-weight:normal;color:#ffffff;transform:scaleX(1.0327)">phát tại Hội thảo. Về bản mềm</div>
<div class="ln" style="left:48.9px;top:356.4px;font-size:11.3px;font-weight:normal;color:#ffffff;transform:scaleX(0.9919)">slides BTC Hội thảo sẽ xin ý kiến</div>
<div class="ln" style="left:48.9px;top:373.1px;font-size:11.3px;font-weight:normal;color:#ffffff;transform:scaleX(1.0033)">của Chuyên gia. Trân trọng cảm</div>
<div class="ln" style="left:48.9px;top:389.7px;font-size:11.3px;font-weight:normal;color:#ffffff;transform:scaleX(0.9915)">ơn!</div>
<div class="ln" style="left:48.9px;top:433.4px;font-size:9.8px;font-weight:normal;color:#d4d4d4;-webkit-text-stroke:0.3px #d4d4d4;transform:scaleX(1.0435)">Nguyen Hung Cuong</div>
<div class="ln" style="left:155.5px;top:433.4px;font-size:9.8px;font-weight:normal;color:#a6a6a6;transform:scaleX(0.9254)">16:32</div>
<div class="ln" style="left:48.9px;top:449.4px;font-size:11.3px;font-weight:normal;color:#ffffff;transform:scaleX(1.0394)">Trong giải pháp số hóa tổng thể</div>
<div class="ln" style="left:48.9px;top:466.1px;font-size:11.3px;font-weight:normal;color:#ffffff;transform:scaleX(0.9959)">của ĐH Thủy Lợi và Đại học</div>
<div class="ln" style="left:48.9px;top:482.7px;font-size:11.3px;font-weight:normal;color:#ffffff;transform:scaleX(1.0087)">Bách Khoa thì những phân hệ</div>
<div class="ln" style="left:48.9px;top:499.4px;font-size:11.3px;font-weight:normal;color:#ffffff;transform:scaleX(1.0284)">nào mua và những phần nào do</div>
<div class="ln" style="left:48.9px;top:516.1px;font-size:11.3px;font-weight:normal;color:#ffffff;transform:scaleX(1.0134)">đội ngũ CNTT của trường làm</div>
<div class="ln" style="left:48.9px;top:532.7px;font-size:11.3px;font-weight:normal;color:#ffffff;transform:scaleX(1.0229)">và việc kết nối lại để trích xuất</div>
<div class="ln" style="left:48.9px;top:549.4px;font-size:11.3px;font-weight:normal;color:#ffffff;transform:scaleX(1.0252)">sử dụng dữ liệu chung do ai</div>
<div class="ln" style="left:48.9px;top:566.1px;font-size:11.3px;font-weight:normal;color:#ffffff;transform:scaleX(0.9469)">làm?</div>
<div class="ln" style="left:48.9px;top:596.8px;font-size:11.3px;font-weight:normal;color:#ffffff;transform:scaleX(1.0238)">Thực tế triển khai các hoạt động</div>
<div class="ln" style="left:48.9px;top:613.5px;font-size:11.3px;font-weight:normal;color:#ffffff;transform:scaleX(1.0096)">chuyển đổi số của các trường</div>
<div class="ln" style="left:48.9px;top:630.1px;font-size:11.3px;font-weight:normal;color:#ffffff;transform:scaleX(1.0200)">khác biệt với Đề án chuyển đổi</div>
<div class="ln" style="left:48.9px;top:646.8px;font-size:11.3px;font-weight:normal;color:#ffffff;transform:scaleX(1.0002)">số đã xây dựng của các trường</div>
<div class="ln" style="left:48.9px;top:663.5px;font-size:11.3px;font-weight:normal;color:#ffffff;transform:scaleX(1.0229)">khoảng bao nhiêu %?</div>
<div class="ln" style="left:30.3px;top:723.2px;font-size:11.0px;font-weight:normal;color:#b4b4b4;transform:scaleX(1.0168)">Type a new message</div>
<div class="ln" style="left:16.9px;top:18.5px;font-size:13.4px;font-weight:bold;color:#ffffff;transform:scaleX(1.0312)">Meeting chat</div>
</div>

</body>
</html>
